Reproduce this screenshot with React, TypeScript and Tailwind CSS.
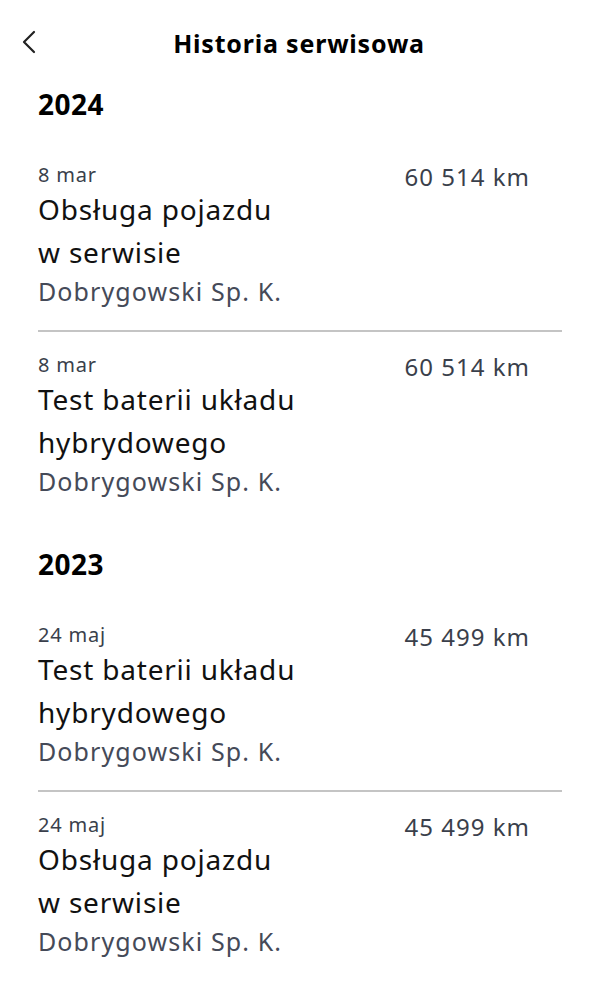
import React from "react";

interface ServiceEntry {
  date: string;
  lines: string[];
  km: string;
  dealer: string;
}

interface YearGroup {
  year: string;
  entries: ServiceEntry[];
}

const history: YearGroup[] = [
  {
    year: "2024",
    entries: [
      { date: "8 mar", lines: ["Obsługa pojazdu", "w serwisie"], km: "60 514 km", dealer: "Dobrygowski Sp. K." },
      { date: "8 mar", lines: ["Test baterii układu", "hybrydowego"], km: "60 514 km", dealer: "Dobrygowski Sp. K." },
    ],
  },
  {
    year: "2023",
    entries: [
      { date: "24 maj", lines: ["Test baterii układu", "hybrydowego"], km: "45 499 km", dealer: "Dobrygowski Sp. K." },
      { date: "24 maj", lines: ["Obsługa pojazdu", "w serwisie"], km: "45 499 km", dealer: "Dobrygowski Sp. K." },
    ],
  },
];

function Entry({ entry, divider }: { entry: ServiceEntry; divider: boolean }) {
  return (
    <div className={`flex justify-between pt-[20px] pb-[22px] ${divider ? "border-b-2 border-[#c4c4c4]" : ""}`}>
      <div className="flex flex-col">
        <span className="text-[20px] leading-[26px] tracking-[0.8px] text-[#3a3f4b]">{entry.date}</span>
        {entry.lines.map((line) => (
          <span key={line} className="text-[28px] leading-[43px] tracking-[0.8px] text-[#111]">
            {line}
          </span>
        ))}
        <span className="text-[25px] leading-[34px] tracking-[1.1px] text-[#454a58]">{entry.dealer}</span>
      </div>
      <span className="text-[24px] leading-[30px] tracking-[1px] text-[#3a3f4b] mr-[32px]">{entry.km}</span>
    </div>
  );
}

export default function App() {
  return (
    <div className="w-[590px] h-[999px] bg-white overflow-hidden" style={{ fontFamily: '"Noto Sans", "Open Sans", sans-serif' }}>
      {/* Nagłówek */}
      <div className="relative flex items-center justify-center h-[88px]">
        <svg className="absolute left-[20px] top-[30px]" width="18" height="24" viewBox="0 0 18 24" fill="none">
          <path d="M14 2 L4 12 L14 22" stroke="#222" strokeWidth="2.2" strokeLinecap="round" strokeLinejoin="round" />
        </svg>
        <h1 className="ml-[8px] text-[25px] font-bold tracking-[0.8px] text-black">Historia serwisowa</h1>
      </div>

      <div className="pl-[38px] pr-[28px]">
        {history.map((group, gi) => (
          <div key={group.year} className={gi > 0 ? "mt-[28px]" : ""}>
            <h2 className="text-[28px] font-bold leading-[32px] tracking-[0.5px] text-black">{group.year}</h2>
            <div className="mt-[22px]">
              {group.entries.map((entry, i) => (
                <Entry key={i} entry={entry} divider={i < group.entries.length - 1} />
              ))}
            </div>
          </div>
        ))}
      </div>
    </div>
  );
}
